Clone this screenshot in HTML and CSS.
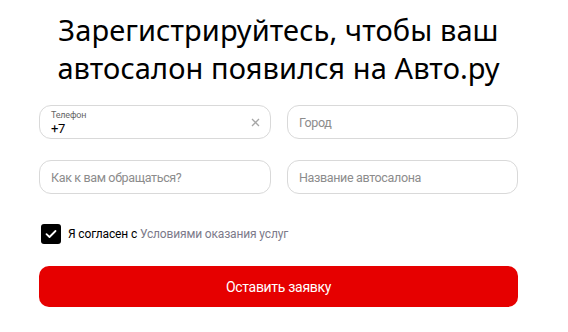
FILE: index.html
```html
<!DOCTYPE html>
<html lang="ru">
<head>
<meta charset="utf-8">
<link rel="stylesheet" href="styles.css">
</head>
<body>
<div class="form">
  <h1 class="title">Зарегистрируйтесь, чтобы ваш<br>автосалон появился на Авто.ру</h1>
  <div class="grid">
    <div class="field field-filled">
      <div class="field-body">
        <span class="field-label">Телефон</span>
        <span class="field-value">+7</span>
      </div>
      <svg class="clear" width="9" height="9" viewBox="0 0 9 9"><path d="M1 1L8 8M8 1L1 8" stroke="#a6a6a6" stroke-width="1.3" fill="none"/></svg>
    </div>
    <div class="field"><span class="placeholder">Город</span></div>
    <div class="field"><span class="placeholder">Как к вам обращаться?</span></div>
    <div class="field"><span class="placeholder">Название автосалона</span></div>
  </div>
  <label class="agree">
    <span class="check"><svg width="12" height="10" viewBox="0 0 12 10"><path d="M1.5 5.2L4.5 8L10.5 2" stroke="#fff" stroke-width="1.8" fill="none" stroke-linecap="round" stroke-linejoin="round"/></svg></span>
    <span class="agree-text">Я согласен с <span class="link">Условиями оказания услуг</span></span>
  </label>
  <button class="submit">Оставить заявку</button>
</div>
</body>
</html>
```
FILE: styles.css
```css
* { box-sizing: border-box; }
body {
  margin: 0;
  background: #fff;
  font-family: Roboto, "Noto Sans", sans-serif;
  color: #000;
}
.form {
  width: 479px;
  margin-left: 39px;
  padding-top: 11px;
}
.title {
  margin: 0;
  font-family: "Noto Sans", sans-serif;
  font-weight: 400;
  font-size: 29px;
  line-height: 38px;
  text-align: center;
  letter-spacing: 0.1px;
}
.grid {
  display: grid;
  grid-template-columns: 232px 231px;
  column-gap: 16px;
  row-gap: 21px;
  margin-top: 18px;
}
.field {
  height: 34px;
  border: 1px solid #d9d9d9;
  border-radius: 12px;
  display: flex;
  align-items: center;
  padding: 0 11px;
  font-size: 12.5px;
  letter-spacing: -0.35px;
}
.placeholder { color: #8c8c8c; }
.field-filled { justify-content: space-between; }
.field-body {
  display: flex;
  flex-direction: column;
  line-height: 1;
  padding-top: 1px;
}
.field-label {
  font-size: 9px;
  color: #666;
  margin-bottom: 2px;
  letter-spacing: -0.2px;
}
.field-value { font-size: 13px; color: #000; }
.clear { margin-right: -1px; }
.agree {
  display: flex;
  align-items: center;
  margin-top: 30px;
  margin-left: 2px;
  font-size: 12px;
  letter-spacing: -0.15px;
}
.check {
  width: 20px;
  height: 20px;
  border-radius: 3px;
  background: #000;
  display: flex;
  align-items: center;
  justify-content: center;
  margin-right: 7px;
}
.link { color: #7c7a8a; }
.submit {
  display: block;
  width: 479px;
  height: 41px;
  margin-top: 22px;
  border: 0;
  border-radius: 10px;
  background: #e60000;
  color: #fff;
  font-family: Roboto, "Noto Sans", sans-serif;
  font-size: 14px;
  letter-spacing: -0.3px;
}
```
